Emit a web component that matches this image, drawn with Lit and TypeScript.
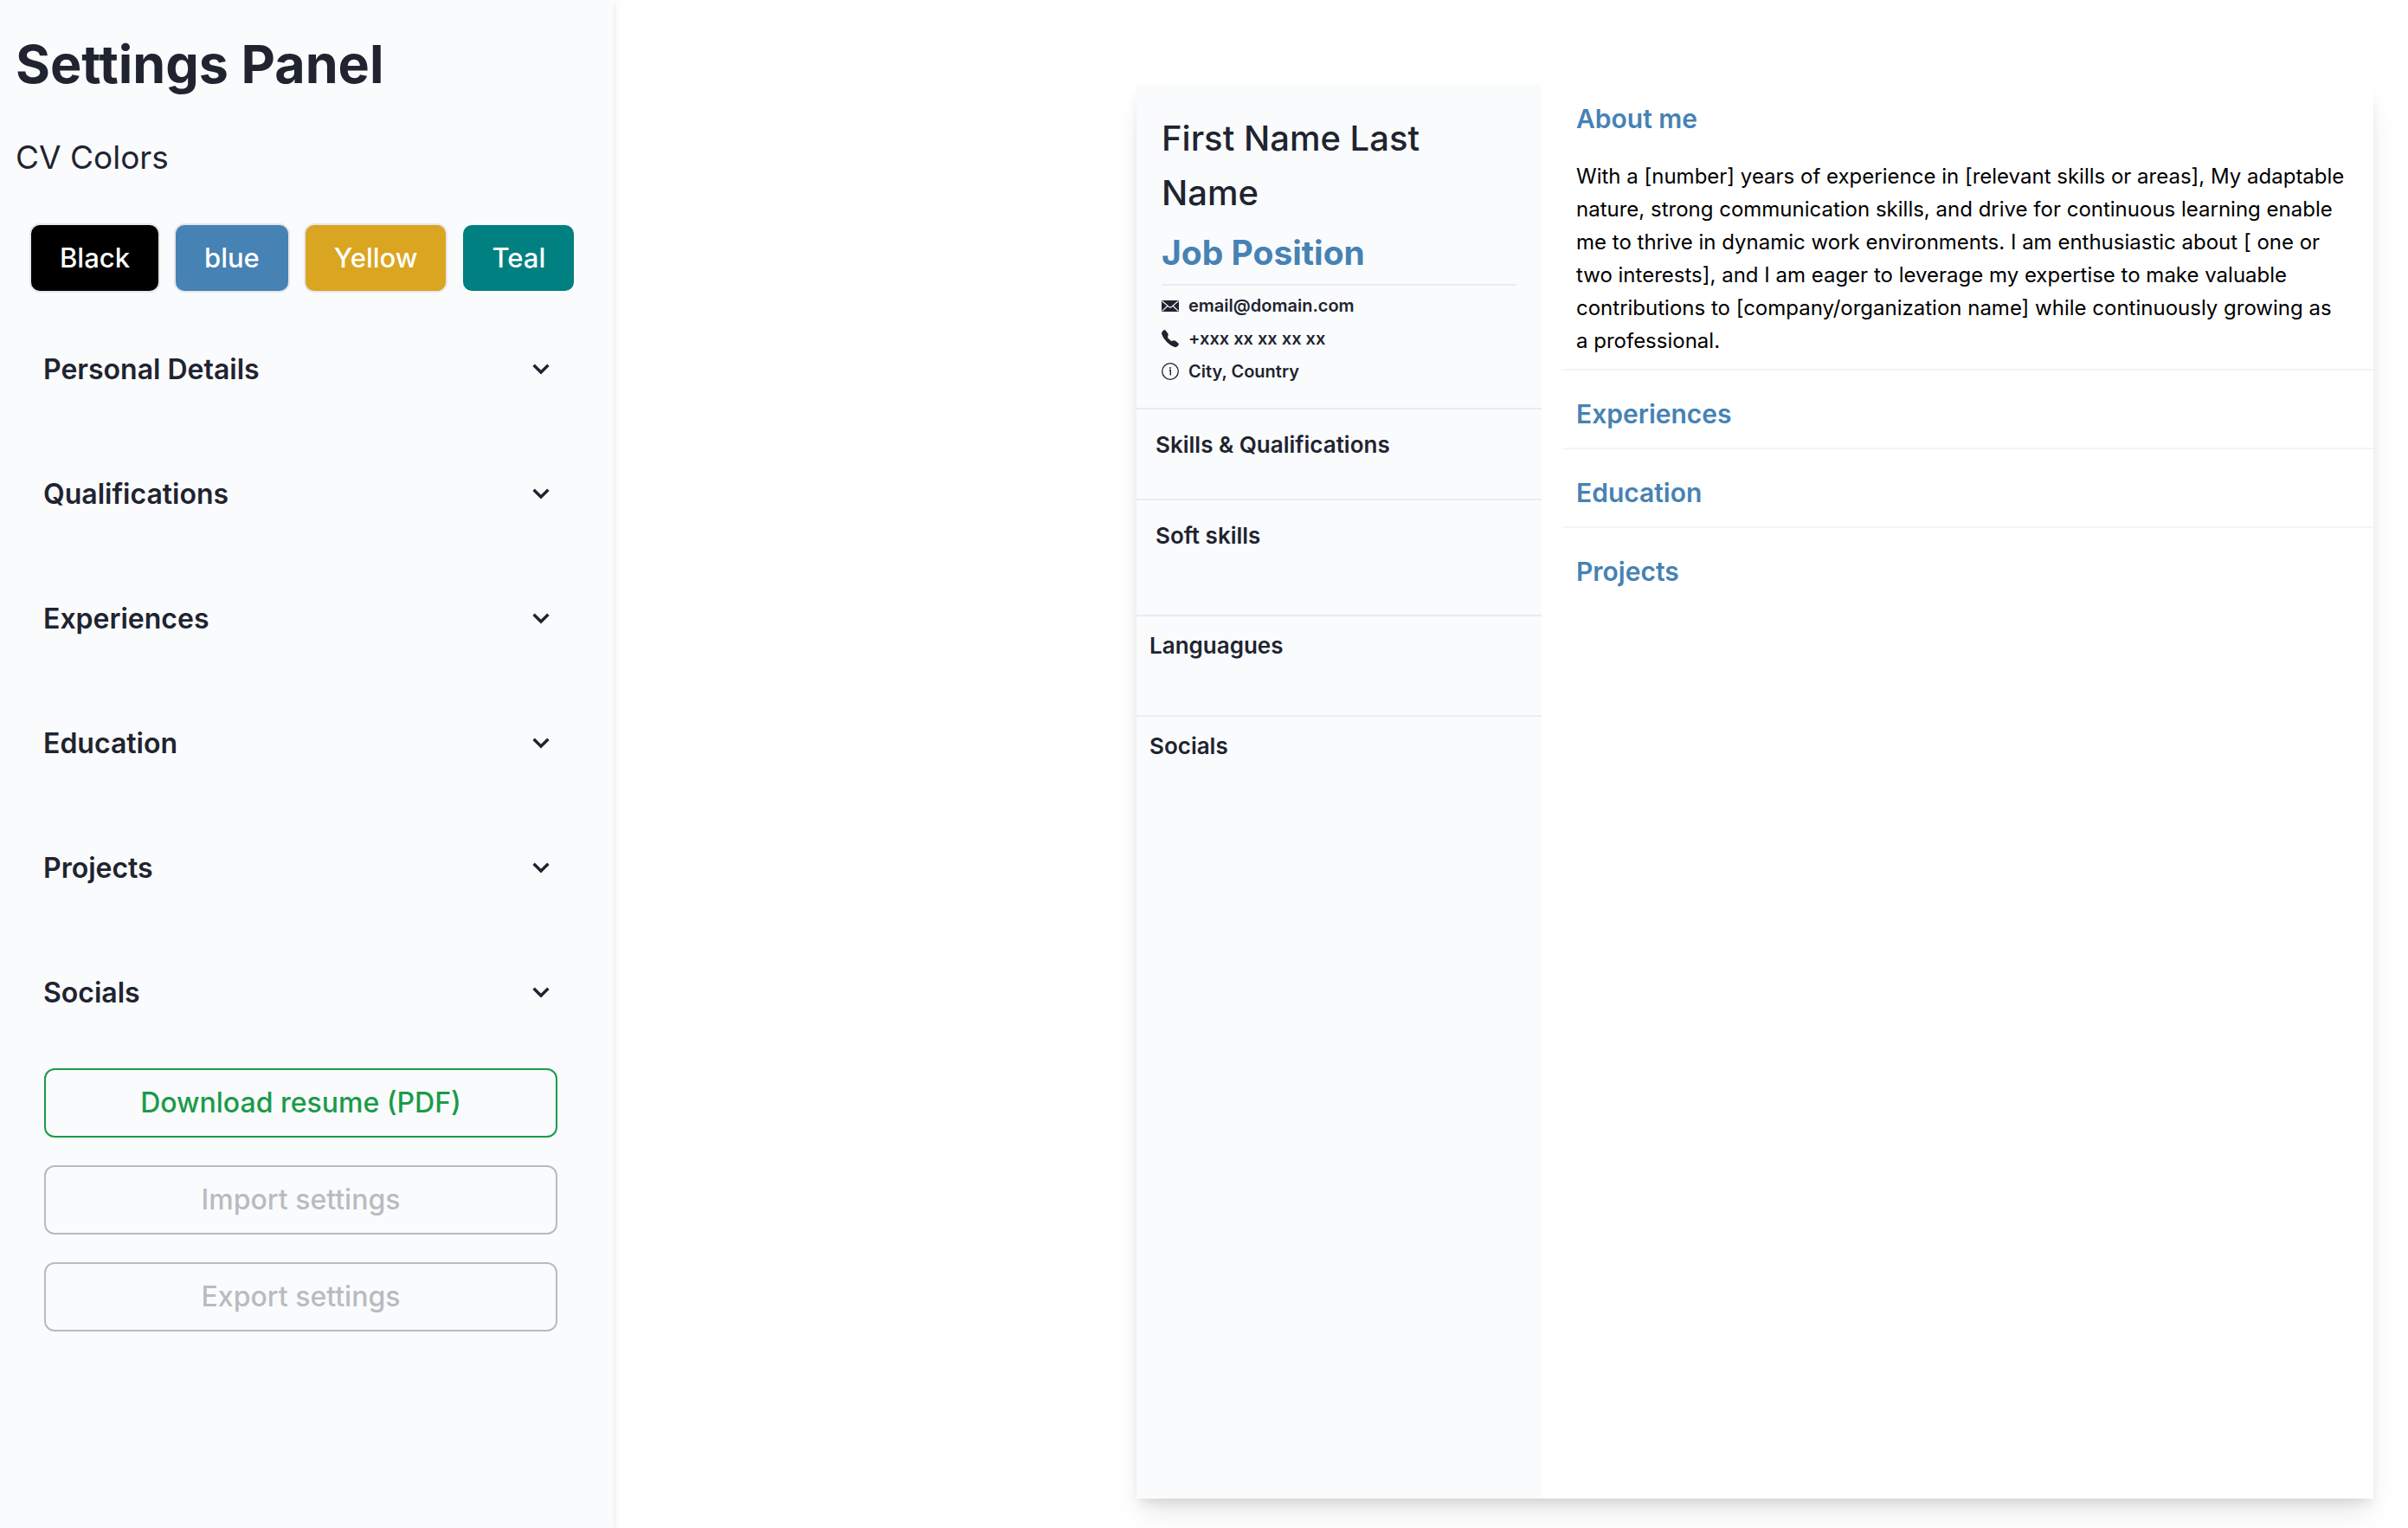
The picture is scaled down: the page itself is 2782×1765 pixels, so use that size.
import { LitElement, html, css } from "lit";
import { customElement } from "lit/decorators.js";

const mailIcon = html`<svg class="icon" viewBox="0 0 20 20" aria-hidden="true">
  <rect x="0" y="4" width="20" height="13" rx="0.6" fill="currentColor" />
  <path d="M0.6 4.8 L8.7 11.6 Q10 12.6 11.3 11.6 L19.4 4.8 M0.6 16.4 L7 10.2 M19.4 16.4 L13 10.2" fill="none" stroke="#fafbfd" stroke-width="1.2" />
</svg>`;

const phoneIcon = html`<svg class="icon" viewBox="0 0 20 20" aria-hidden="true">
  <path d="M2.2 0.5 Q3.6 -0.5 4.8 0.9 L7.2 4 Q7.9 5 7.6 6.2 L7 8.6 Q7 9 7.4 9.5 L10.6 12.6 Q11 13 11.5 12.9 L13.9 12.3 Q15 12.1 16 12.8 L19.1 15.2 Q20.5 16.4 19.4 17.8 L18 19.2 Q17 20.2 15.2 19.9 Q10.4 18.6 5.9 14.1 Q1.4 9.6 0.1 4.8 Q-0.2 3 0.8 2 Z" fill="currentColor" />
</svg>`;

const infoIcon = html`<svg class="icon" viewBox="0 0 20 20" aria-hidden="true">
  <circle cx="10" cy="10" r="9.3" fill="none" stroke="currentColor" stroke-width="1.3" />
  <path d="M8.8 8.5 H10.3 V14.6" fill="none" stroke="currentColor" stroke-width="1.4" />
  <circle cx="10" cy="5.9" r="1" fill="currentColor" />
</svg>`;

const chevronIcon = html`<svg class="chevron" viewBox="0 0 40 40" aria-hidden="true">
  <path d="M11.6 14.8 L20 23 L28.4 14.8" fill="none" stroke="currentColor" stroke-width="3.4" />
</svg>`;

const swatches = ["Black", "blue", "Yellow", "Teal"];
const sections = ["Personal Details", "Qualifications", "Experiences", "Education", "Projects", "Socials"];

@customElement("settings-panel")
class SettingsPanel extends LitElement {
  static styles = css`
    :host { display: block; background: #fafbfd; color: #1f2430; box-shadow: 0 2px 6px rgba(0, 0, 0, 0.06), 0 0 12px rgba(0, 0, 0, 0.06); }
    * { box-sizing: border-box; }
    h1, h2 { margin: 0; }
    button { cursor: pointer; }
    .title { padding: 26px 18px 0; font-size: 61px; line-height: 96px; font-weight: 700; }
    .subtitle { padding: 30px 18px 0; font-size: 37px; line-height: 60px; font-weight: 400; }
    .swatches { display: flex; gap: 16px; padding: 46px 34px 0; }
    .swatch { height: 80px; padding: 0 33px; border: 2px solid #e5e7eb; border-radius: 12px; color: #fff; font: 500 31px/48px var(--font); }
    .swatch.black { background: #000; }
    .swatch.blue { background: #4682b4; }
    .swatch.yellow { background: #daa520; }
    .swatch.teal { background: #008080; border-color: #fff; }
    .sections { display: flex; flex-direction: column; gap: 64px; padding: 49px 64px 0 50px; }
    .section { display: flex; align-items: center; justify-content: space-between; width: 100%; height: 80px; padding: 0; border: 0; background: none; color: inherit; font: 600 32px/48px var(--font); text-align: left; }
    .chevron { width: 40px; height: 40px; }
    .actions { display: flex; flex-direction: column; gap: 32px; padding: 47px 65px 0 51px; }
    .action { height: 80px; border: 2px solid #b9bbbd; border-radius: 12px; background: none; color: #b9bbbd; font: 500 32px/48px var(--font); }
    .action.primary { border-color: #1a9b49; color: #1a9b49; }
  `;
  render() {
    return html`
      <h1 class="title">Settings Panel</h1>
      <h2 class="subtitle">CV Colors</h2>
      <div class="swatches">
        ${swatches.map((s) => html`<button class="swatch ${s.toLowerCase()}">${s}</button>`)}
      </div>
      <div class="sections">
        ${sections.map((s) => html`<button class="section" aria-expanded="false"><span>${s}</span>${chevronIcon}</button>`)}
      </div>
      <div class="actions">
        <button class="action primary">Download resume (PDF)</button>
        <button class="action">Import settings</button>
        <button class="action">Export settings</button>
      </div>`;
  }
}

@customElement("cv-preview")
class CvPreview extends LitElement {
  static styles = css`
    :host { display: grid; grid-template-columns: 468fr 961fr; background: #fff; color: #1f2430; box-shadow: 0 20px 30px -6px rgba(0, 0, 0, 0.1), 0 8px 12px -4px rgba(0, 0, 0, 0.1); }
    * { box-sizing: border-box; }
    h2, h3, h4, p, ul { margin: 0; padding: 0; }
    .side { background: #fafbfd; }
    .side .identity { padding: 30px 29px 23px; border-bottom: 2px solid #ebecee; }
    .name { font-size: 40px; line-height: 63px; font-weight: 500; }
    .side .job { padding-top: 2px; border-bottom: 2px solid #ebecee; color: #4682b4; font-size: 39px; line-height: 72px; font-weight: 700; }
    .side .contacts { list-style: none; padding-top: 4px; }
    .contact { display: flex; align-items: center; gap: 11px; height: 38px; font-size: 20px; line-height: 38px; font-weight: 600; }
    .icon { width: 20px; height: 20px; }
    .block { border-bottom: 2px solid #ebecee; font-size: 26px; line-height: 40px; font-weight: 600; }
    .side .skills { height: 105px; padding: 21px 22px; }
    .side .soft { height: 134px; padding: 21px 22px; }
    .side .languages { height: 116px; padding: 14px 15px; }
    .side .socials { padding: 14px 15px; border: 0; }
    .main { padding-left: 25px; }
    .part { padding: 14px 31px 13px 15px; border-bottom: 2px solid #f3f4f6; color: #4682b4; }
    .part:last-child { border: 0; }
    .heading { font-size: 30px; line-height: 50px; font-weight: 600; }
    .part .about { padding-top: 23px; color: #000; font-size: 24px; line-height: 38px; }
    .part + .part { padding: 25px 15px 14px; }
  `;
  render() {
    return html`
      <div class="side">
        <div class="identity">
          <h2 class="name">First Name Last Name</h2>
          <h3 class="job">Job Position</h3>
          <ul class="contacts">
            <li class="contact">${mailIcon}<span>email@domain.com</span></li>
            <li class="contact">${phoneIcon}<span>+xxx xx xx xx xx</span></li>
            <li class="contact">${infoIcon}<span>City, Country</span></li>
          </ul>
        </div>
        <h4 class="block skills">Skills &amp; Qualifications</h4>
        <h4 class="block soft">Soft skills</h4>
        <h4 class="block languages">Languagues</h4>
        <h4 class="block socials">Socials</h4>
      </div>
      <div class="main">
        <div class="part">
          <h3 class="heading">About me</h3>
          <p class="about">With a [number] years of experience in [relevant skills or areas], My adaptable nature, strong communication skills, and drive for continuous learning enable me to thrive in dynamic work environments. I am enthusiastic about [ one or two interests], and I am eager to leverage my expertise to make valuable contributions to [company/organization name] while continuously growing as a professional.</p>
        </div>
        ${["Experiences", "Education", "Projects"].map((t) => html`<div class="part"><h3 class="heading">${t}</h3></div>`)}
      </div>`;
  }
}

@customElement("app-root")
class AppRoot extends LitElement {
  static styles = css`
    :host { --font: Inter, "Liberation Sans", sans-serif; display: flex; justify-content: space-between; min-height: 100vh; background: #fff; font-family: var(--font); }
    .panel { flex: 0 0 709px; }
    .preview { flex: 0 1 1429px; margin: 98px 40px 34px; }
  `;
  render() {
    return html`<settings-panel class="panel"></settings-panel><cv-preview class="preview"></cv-preview>`;
  }
}
